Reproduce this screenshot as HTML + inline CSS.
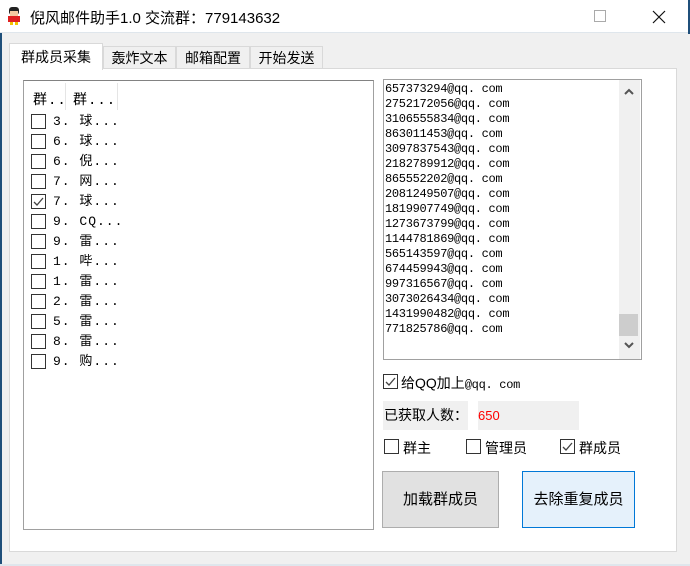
<!DOCTYPE html><html><head><meta charset="utf-8"><style>
*{margin:0;padding:0;box-sizing:border-box}
body{width:690px;height:566px;background:#f0f0f0;position:relative;overflow:hidden;font-family:"Liberation Sans","Noto Sans CJK SC",sans-serif;font-size:14px;color:#000}
.a{position:absolute}
.title{left:0;top:0;width:690px;height:33px;background:#fff;border-bottom:1px solid #dfe6ec}
.cb{position:absolute;width:15px;height:15px;border:1px solid #333;background:#fff}
.mono{font-family:"Liberation Mono","Noto Sans CJK SC",monospace;font-size:12px}
.row{position:absolute;left:31px;height:20px;font-size:13px;line-height:16px}
.row span{position:absolute;left:22px;white-space:nowrap;letter-spacing:1px;font-family:"Liberation Mono","Noto Sans CJK SC",monospace}
</style></head><body>
<div class="a" style="left:0;top:0;width:2px;height:566px;background:#1f4f7a"></div>
<div class="a title"></div>
<div class="a" style="right:0;top:0;width:2px;height:34px;background:#1f4f7a"></div>
<div class="a" style="left:6px;top:6px;width:16px;height:20px">
<svg width="16" height="20"><rect x="3" y="1" width="10" height="8" rx="3" fill="#222"/><rect x="4" y="5" width="8" height="5" fill="#f5c9a0"/><rect x="2" y="10" width="12" height="6" fill="#e02020"/><rect x="4" y="16" width="3" height="3" fill="#f2c200"/><rect x="9" y="16" width="3" height="3" fill="#f2c200"/></svg></div>
<div class="a" style="left:30px;top:7px;font-size:15px">倪风邮件助手1.0 交流群：779143632</div>
<div class="a" style="left:594px;top:10px;width:12px;height:12px;border:1px solid #aaa"></div>
<svg class="a" style="left:652px;top:10px" width="14" height="14"><path d="M1 1l12 12M13 1L1 13" stroke="#111" stroke-width="1.2"/></svg>
<!-- tabs -->
<div class="a" style="left:103px;top:46px;width:73px;height:23px;border:1px solid #d9d9d9;background:#f0f0f0;text-align:center;line-height:22px">轰炸文本</div>
<div class="a" style="left:176px;top:46px;width:74px;height:23px;border:1px solid #d9d9d9;background:#f0f0f0;text-align:center;line-height:22px">邮箱配置</div>
<div class="a" style="left:250px;top:46px;width:73px;height:23px;border:1px solid #d9d9d9;background:#f0f0f0;text-align:center;line-height:22px">开始发送</div>
<div class="a" style="left:9px;top:68px;width:668px;height:484px;background:#fff;border:1px solid #d9d9d9"></div>
<div class="a" style="left:9px;top:43px;width:94px;height:27px;background:#fff;border:1px solid #d9d9d9;border-bottom:none;text-align:center;line-height:26px">群成员采集</div>
<!-- list -->
<div class="a" style="left:23px;top:80px;width:351px;height:450px;border:1px solid #a0a0a0;border-top-color:#828282;background:#fff"></div>
<div class="a" style="left:65px;top:83px;width:1px;height:27px;background:#e5e5e5"></div>
<div class="a" style="left:117px;top:83px;width:1px;height:27px;background:#e5e5e5"></div>
<div class="a mono" style="left:33px;top:89px;font-size:14px;letter-spacing:1px">群..</div>
<div class="a mono" style="left:73px;top:89px;font-size:14px;letter-spacing:1px">群...</div>
<div class="row" style="top:114px"><div class="cb"></div><span>3. 球...</span></div>
<div class="row" style="top:134px"><div class="cb"></div><span>6. 球...</span></div>
<div class="row" style="top:154px"><div class="cb"></div><span>6. 倪...</span></div>
<div class="row" style="top:174px"><div class="cb"></div><span>7. 网...</span></div>
<div class="row" style="top:194px"><div class="cb"><svg width="13" height="13" style="position:absolute;left:0;top:0"><path d="M2 7l3 3 6-7" stroke="#444" stroke-width="1.3" fill="none"/></svg></div><span>7. 球...</span></div>
<div class="row" style="top:214px"><div class="cb"></div><span>9. CQ...</span></div>
<div class="row" style="top:234px"><div class="cb"></div><span>9. 雷...</span></div>
<div class="row" style="top:254px"><div class="cb"></div><span>1. 哔...</span></div>
<div class="row" style="top:274px"><div class="cb"></div><span>1. 雷...</span></div>
<div class="row" style="top:294px"><div class="cb"></div><span>2. 雷...</span></div>
<div class="row" style="top:314px"><div class="cb"></div><span>5. 雷...</span></div>
<div class="row" style="top:334px"><div class="cb"></div><span>8. 雷...</span></div>
<div class="row" style="top:354px"><div class="cb"></div><span>9. 购...</span></div>
<!-- textbox -->
<div class="a" style="left:383px;top:79px;width:259px;height:281px;border:1px solid #a0a0a0;background:#fff"></div>
<div class="a" style="left:619px;top:80px;width:21px;height:279px;background:#f0f0f0"></div>
<div class="a" style="left:619px;top:314px;width:19px;height:22px;background:#cdcdcd"></div>
<svg class="a" style="left:622px;top:340px" width="14" height="10"><path d="M3 3l4 4 4-4" stroke="#555" stroke-width="2" fill="none"/></svg>
<svg class="a" style="left:622px;top:87px" width="14" height="10"><path d="M3 7l4-4 4 4" stroke="#555" stroke-width="2" fill="none"/></svg>
<div class="a" style="left:385px;top:82px;font-family:'Liberation Mono',monospace;font-size:12px;line-height:15px;letter-spacing:-0.3px;white-space:pre">657373294@qq. com
2752172056@qq. com
3106555834@qq. com
863011453@qq. com
3097837543@qq. com
2182789912@qq. com
865552202@qq. com
2081249507@qq. com
1819907749@qq. com
1273673799@qq. com
1144781869@qq. com
565143597@qq. com
674459943@qq. com
997316567@qq. com
3073026434@qq. com
1431990482@qq. com
771825786@qq. com</div>
<div class="cb" style="left:383px;top:374px"><svg width="13" height="13" style="position:absolute;left:0;top:0"><path d="M2 7l3 3 6-7" stroke="#444" stroke-width="1.3" fill="none"/></svg></div>
<div class="a" style="left:401px;top:373px">给QQ加上<span style="font-family:'Liberation Mono',monospace;font-size:12px;letter-spacing:-0.3px">@qq. com</span></div>
<div class="a" style="left:383px;top:401px;width:85px;height:29px;background:#f0f0f0;line-height:29px;padding-left:1px">已获取人数：</div>
<div class="a" style="left:478px;top:401px;width:101px;height:29px;background:#f0f0f0;line-height:29px;color:#f00;font-size:13px">650</div>
<div class="cb" style="left:384px;top:439px"></div><div class="a" style="left:403px;top:438px">群主</div>
<div class="cb" style="left:466px;top:439px"></div><div class="a" style="left:485px;top:438px">管理员</div>
<div class="cb" style="left:560px;top:439px"><svg width="13" height="13" style="position:absolute;left:0;top:0"><path d="M2 7l3 3 6-7" stroke="#444" stroke-width="1.3" fill="none"/></svg></div><div class="a" style="left:579px;top:438px">群成员</div>
<div class="a" style="left:382px;top:471px;width:117px;height:57px;background:#e1e1e1;border:1px solid #adadad;text-align:center;line-height:55px;font-size:15px">加载群成员</div>
<div class="a" style="left:522px;top:471px;width:113px;height:57px;background:#e5f1fb;border:1px solid #0078d7;text-align:center;line-height:55px;font-size:15px">去除重复成员</div>
<div class="a" style="left:0;top:564px;width:690px;height:2px;background:#dfe6ec"></div>
</body></html>
